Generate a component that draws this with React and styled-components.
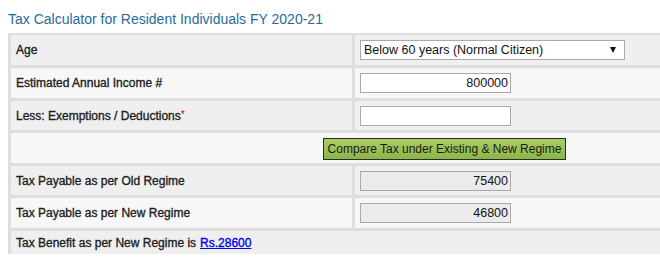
import React from "react";
import styled, { createGlobalStyle } from "styled-components";

const GlobalStyle = createGlobalStyle`
  html, body {
    margin: 0;
    padding: 0;
    background: #fff;
    overflow: hidden;
  }
  body {
    font-family: "Liberation Sans", Arial, sans-serif;
  }
`;

const Page = styled.div`
  padding: 10px 0 0 8px;
`;

const Heading = styled.h2`
  margin: 0 0 5px;
  font-family: "Liberation Sans", Arial, sans-serif;
  font-size: 14px;
  line-height: 18px;
  font-weight: normal;
  color: #1f6d9c;
`;

const Table = styled.div`
  width: 867px;
  border-top: 2px solid #dedede;
  border-left: 3px solid #dedede;
  background: #dedede;
`;

const Row = styled.div`
  display: grid;
  grid-template-columns: ${p => (p.$full ? "1fr" : "341px 1fr")};
  gap: 3px;
  margin-bottom: 3px;
  height: ${p => p.$h || 30}px;
`;

const Cell = styled.div`
  display: flex;
  align-items: center;
  justify-content: ${p => (p.$center ? "center" : "flex-start")};
  padding: 0 ${p => (p.$center ? 0 : 5)}px;
  background: ${p => (p.$light ? "#f7f7f7" : "#efefef")};
  font-size: 12px;
  color: #1e1e1e;
  -webkit-text-stroke: ${p => (p.$label ? "0.35px #1e1e1e" : "0")};
`;

const Star = styled.span`
  color: #c00;
  font-size: 10px;
  align-self: flex-start;
  margin-top: 8px;
  -webkit-text-stroke: 0;
`;

const Select = styled.div`
  position: relative;
  box-sizing: border-box;
  width: 265px;
  height: 20px;
  border: 1px solid #a9a9a9;
  background: #fff;
  font-size: 12.5px;
  line-height: 18px;
  padding-left: 3px;
  color: #111;
  &::after {
    content: "";
    position: absolute;
    right: 8px;
    top: 6px;
    border-left: 3px solid transparent;
    border-right: 3px solid transparent;
    border-top: 6px solid #111;
  }
`;

const Input = styled.input`
  box-sizing: border-box;
  width: 151px;
  height: 20px;
  margin: 0;
  padding: 0 2px;
  border: 1px solid #a9a9a9;
  background: ${p => (p.readOnly ? "#ebebeb" : "#fff")};
  font-family: "Liberation Sans", Arial, sans-serif;
  font-size: 12.5px;
  color: #111;
  text-align: right;
`;

const Button = styled.button`
  box-sizing: border-box;
  height: 22px;
  padding: 0 4px;
  border: 1px solid #2b2b2b;
  background: linear-gradient(#a9cd63, #8cb648);
  font-family: "Liberation Sans", Arial, sans-serif;
  font-size: 12px;
  color: #1a1a1a;
  margin-top: 1px;
`;

const Link = styled.a`
  color: #0000ee;
  text-decoration: underline;
  margin-left: 4px;
  -webkit-text-stroke: 0.35px #0000ee;
`;

export default function App() {
  return (
    <Page>
      <GlobalStyle />
      <Heading>Tax Calculator for Resident Individuals FY 2020-21</Heading>
      <Table>
        <Row>
          <Cell $label>Age</Cell>
          <Cell>
            <Select>Below 60 years (Normal Citizen)</Select>
          </Cell>
        </Row>
        <Row>
          <Cell $label $light>Estimated Annual Income #</Cell>
          <Cell $light>
            <Input defaultValue="800000" />
          </Cell>
        </Row>
        <Row $h={29}>
          <Cell $label>
            Less: Exemptions / Deductions<Star>*</Star>
          </Cell>
          <Cell>
            <Input defaultValue="" />
          </Cell>
        </Row>
        <Row $full>
          <Cell $light $center>
            <Button>Compare Tax under Existing &amp; New Regime</Button>
          </Cell>
        </Row>
        <Row $h={29}>
          <Cell $label>Tax Payable as per Old Regime</Cell>
          <Cell>
            <Input readOnly defaultValue="75400" />
          </Cell>
        </Row>
        <Row>
          <Cell $label $light>Tax Payable as per New Regime</Cell>
          <Cell $light>
            <Input readOnly defaultValue="46800" />
          </Cell>
        </Row>
        <Row $full $h={23}>
          <Cell $label>
            Tax Benefit as per New Regime is<Link href="#">Rs.28600</Link>
          </Cell>
        </Row>
      </Table>
    </Page>
  );
}
